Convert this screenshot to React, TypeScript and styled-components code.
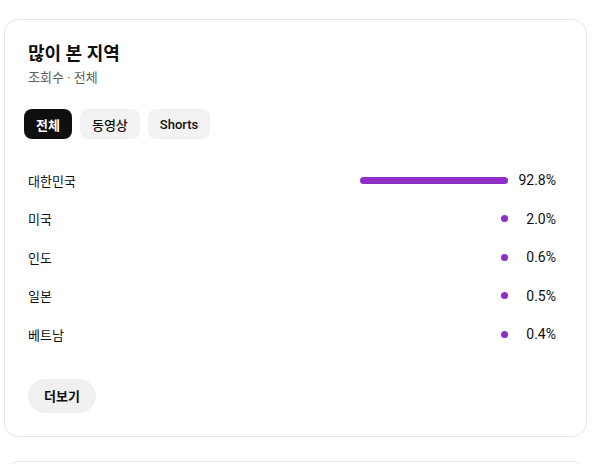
import React from "react";
import styled, { createGlobalStyle } from "styled-components";

const GlobalStyle = createGlobalStyle`
  html, body {
    margin: 0;
    padding: 0;
    background: #ffffff;
    font-family: Roboto, "Noto Sans CJK KR", "Noto Sans", sans-serif;
    color: #0f0f0f;
    overflow: hidden;
  }
  * { box-sizing: border-box; }
`;

const Page = styled.div`
  display: flex;
  flex-direction: column;
  gap: 24px;
  padding: 19px 13px 0 4px;
`;

const Card = styled.section`
  border: 1px solid #e6e6e6;
  border-radius: 14px;
  background: #fff;
  padding: 19px 23px 23px 19px;
  display: flex;
  flex-direction: column;
`;

const EmptyCard = styled(Card)`
  height: 200px;
`;

const Header = styled.header`
  padding: 0 4px;
`;

const Title = styled.h2`
  margin: 0;
  font-size: 18px;
  line-height: 28px;
  font-weight: 700;
  padding-top: 1px;
`;

const Subtitle = styled.div`
  margin-top: 1px;
  font-size: 13px;
  line-height: 18px;
  color: #606060;
`;

const ChipRow = styled.div`
  display: flex;
  gap: 8px;
  margin-top: 22px;
`;

const Chip = styled.button<{ $active?: boolean }>`
  height: 30px;
  padding: 0 12px;
  border: none;
  border-radius: 8px;
  font-family: inherit;
  font-size: 13px;
  font-weight: ${(p) => (p.$active ? 700 : 500)};
  background: ${(p) => (p.$active ? "#0f0f0f" : "#f2f2f2")};
  color: ${(p) => (p.$active ? "#ffffff" : "#0f0f0f")};
  cursor: pointer;
`;

const List = styled.div`
  display: flex;
  flex-direction: column;
  margin-top: 22px;
  padding: 0 7px 0 4px;
`;

const Row = styled.div`
  display: grid;
  grid-template-columns: 1fr 160px 40px;
  column-gap: 8px;
  align-items: center;
  height: 38.5px;
`;

const Name = styled.div`
  font-size: 13px;
  color: #0f0f0f;
`;

const Track = styled.div`
  display: flex;
  justify-content: flex-end;
`;

const Fill = styled.div`
  height: 7px;
  min-width: 7px;
  border-radius: 4px;
  background: #8e2ec6;
`;

const Percent = styled.div`
  font-size: 14px;
  text-align: right;
  color: #0f0f0f;
`;

const MoreButton = styled.button`
  align-self: flex-start;
  margin: 25px 0 0 4px;
  height: 34px;
  padding: 0 16px;
  border: none;
  border-radius: 17px;
  background: #f0f0f0;
  font-family: inherit;
  font-size: 13px;
  font-weight: 700;
  color: #0f0f0f;
  cursor: pointer;
`;

const data = [
  { name: "대한민국", value: 92.8 },
  { name: "미국", value: 2.0 },
  { name: "인도", value: 0.6 },
  { name: "일본", value: 0.5 },
  { name: "베트남", value: 0.4 },
];

export default function App() {
  return (
    <>
      <GlobalStyle />
      <Page>
        <Card>
          <Header>
            <Title>많이 본 지역</Title>
            <Subtitle>조회수 · 전체</Subtitle>
          </Header>
          <ChipRow>
            <Chip $active>전체</Chip>
            <Chip>동영상</Chip>
            <Chip>Shorts</Chip>
          </ChipRow>
          <List>
            {data.map((d) => (
              <Row key={d.name}>
                <Name>{d.name}</Name>
                <Track>
                  <Fill style={{ width: `${d.value}%` }} />
                </Track>
                <Percent>{d.value.toFixed(1)}%</Percent>
              </Row>
            ))}
          </List>
          <MoreButton>더보기</MoreButton>
        </Card>
        <EmptyCard />
      </Page>
    </>
  );
}
